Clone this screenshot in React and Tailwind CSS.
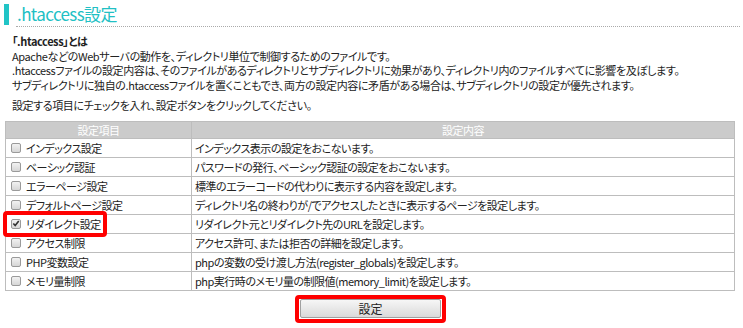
import React from "react";

const rows = [
  ["インデックス設定", "インデックス表示の設定をおこないます。"],
  ["ベーシック認証", "パスワードの発行、ベーシック認証の設定をおこないます。"],
  ["エラーページ設定", "標準のエラーコードの代わりに表示する内容を設定します。"],
  ["デフォルトページ設定", "ディレクトリ名の終わりが/でアクセスしたときに表示するページを設定します。"],
  ["リダイレクト設定", "リダイレクト元とリダイレクト先のURLを設定します。", true],
  ["アクセス制限", "アクセス許可、または拒否の詳細を設定します。"],
  ["PHP変数設定", "phpの変数の受け渡し方法(register_globals)を設定します。"],
  ["メモリ量制限", "php実行時のメモリ量の制限値(memory_limit)を設定します。"],
];

function Box({ checked }) {
  return (
    <span className="inline-flex items-center justify-center w-[10px] h-[10px] border border-[#9a9a9a] rounded-[2px] bg-gradient-to-b from-[#f2f2f2] to-[#d6d6d6] shrink-0">
      {checked && (
        <svg width="9" height="9" viewBox="0 0 9 9">
          <path d="M1.5 4.5 L3.6 6.8 L7.6 1.6" stroke="#333" strokeWidth="1.8" fill="none" />
        </svg>
      )}
    </span>
  );
}

export default function App() {
  return (
    <div
      className="w-[743px] h-[328px] bg-white overflow-hidden text-[#222] [font-feature-settings:'palt']"
      style={{ fontFamily: '"Noto Sans CJK JP", "Noto Sans", sans-serif' }}
    >
      <div className="flex items-center h-[22px] mt-[3px] ml-[4px]">
        <div className="w-[5px] h-[21px] bg-[#21c4c6]" />
        <div className="ml-[8px] text-[17px] leading-[22px] text-[#21c0c4] tracking-[-0.6px]">.htaccess設定</div>
      </div>
      <div className="ml-[16px] mr-[3px] mt-[1px] border-t border-dotted border-[#aaa]" />
      <div className="ml-[12px] mt-[7px] text-[11px] leading-[14.5px] tracking-[-0.4px]">
        <div className="font-bold">「.htaccess」とは</div>
        <div>ApacheなどのWebサーバの動作を、ディレクトリ単位で制御するためのファイルです。</div>
        <div>.htaccessファイルの設定内容は、そのファイルがあるディレクトリとサブディレクトリに効果があり、ディレクトリ内のファイルすべてに影響を及ぼします。</div>
        <div>サブディレクトリに独自の.htaccessファイルを置くこともでき、両方の設定内容に矛盾がある場合は、サブディレクトリの設定が優先されます。</div>
        <div className="mt-[6px]">設定する項目にチェックを入れ、設定ボタンをクリックしてください。</div>
      </div>
      <table className="ml-[5px] mt-[8px] w-[730px] border-collapse text-[11px] tracking-[-0.5px]">
        <thead>
          <tr className="h-[17px] bg-[#cbcbcb] text-white">
            <th className="w-[186px] border border-[#bdbdbd] font-normal p-0 leading-[16px]">設定項目</th>
            <th className="border border-[#bdbdbd] font-normal p-0 leading-[16px]">設定内容</th>
          </tr>
        </thead>
        <tbody>
          {rows.map(([name, desc, checked]) => (
            <tr key={name} className="h-[19px]">
              <td className="relative border border-[#bdbdbd] p-0 pl-[5px]">
                <div className="flex items-center gap-[5px] leading-[18px]">
                  <Box checked={checked} />
                  <span>{name}</span>
                </div>
                {checked && (
                  <div className="absolute left-[-3px] top-[-4px] w-[104px] h-[26px] border-[4px] border-[#ff0000] rounded-[4px]" />
                )}
              </td>
              <td className="border border-[#bdbdbd] p-0 pl-[3px] leading-[18px]">{desc}</td>
            </tr>
          ))}
        </tbody>
      </table>
      <div className="flex justify-center mt-[4px] pr-[2px]">
        <div className="w-[151px] h-[28px] border-[4px] border-[#ff0000] rounded-[4px] p-0 flex items-center justify-center">
          <button className="w-[141px] h-[19px] border border-[#a0a0a0] rounded-[2px] bg-gradient-to-b from-[#f6f6f6] to-[#dadada] text-[12px] leading-[17px] text-[#222]">
            設定
          </button>
        </div>
      </div>
    </div>
  );
}
